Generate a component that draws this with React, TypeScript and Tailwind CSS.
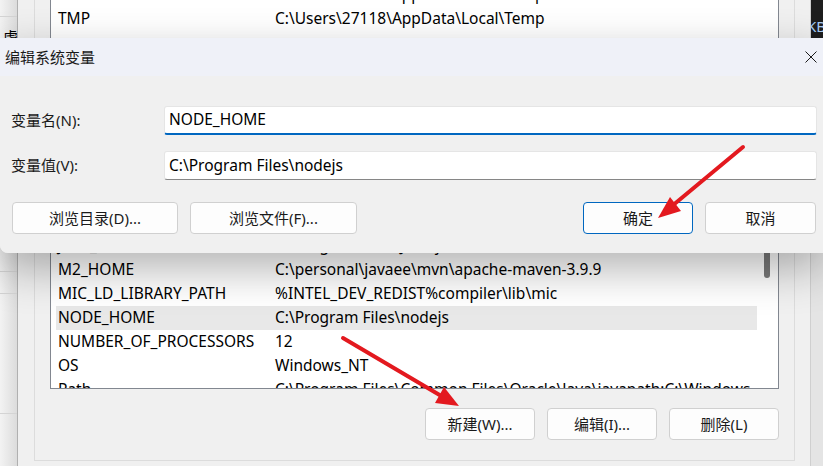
import React from "react";

type Row = { name: string; value: string; selected?: boolean };

const topRows: Row[] = [
  { name: "TEMP", value: "C:\\Users\\27118\\AppData\\Local\\Temp" },
  { name: "TMP", value: "C:\\Users\\27118\\AppData\\Local\\Temp" },
];

const bottomRows: Row[] = [
  { name: "JAVA_HOME", value: "C:\\Program Files\\Java\\jdk-17" },
  { name: "M2_HOME", value: "C:\\personal\\javaee\\mvn\\apache-maven-3.9.9" },
  { name: "MIC_LD_LIBRARY_PATH", value: "%INTEL_DEV_REDIST%compiler\\lib\\mic" },
  { name: "NODE_HOME", value: "C:\\Program Files\\nodejs", selected: true },
  { name: "NUMBER_OF_PROCESSORS", value: "12" },
  { name: "OS", value: "Windows_NT" },
  { name: "Path", value: "C:\\Program Files\\Common Files\\Oracle\\Java\\javapath;C:\\Windows" },
];

const VarRow = ({ row }: { row: Row }) => (
  <div className={`flex h-[24px] items-center pl-[2px] whitespace-nowrap ${row.selected ? "bg-[#e8e8e8]" : ""}`}>
    <div className="w-[217px] shrink-0">{row.name}</div>
    <div>{row.value}</div>
  </div>
);

const WinButton = ({ label, className = "" }: { label: string; className?: string }) => (
  <button
    className={`flex h-[32px] items-center justify-center rounded-[4px] border bg-[#fdfdfd] text-[15px] text-[#1a1a1a] ${className}`}
  >
    {label}
  </button>
);

const LeftStrip = () => (
  <div className="flex w-[17px] shrink-0 flex-col overflow-hidden bg-linear-to-r from-[#f3f3f3] to-[#dcdcdc]">
    <div className="h-[17px] shrink-0 border-b border-[#d4d4d4]" />
    <div className="h-[255px] shrink-0 border-b border-[#d4d4d4] pl-[3px] pt-[10px] text-[15px] leading-[20px] whitespace-nowrap">
      虚
    </div>
    <div className="h-[22px] shrink-0 border-b border-[#d4d4d4]" />
    <div className="h-[120px] shrink-0 border-b border-[#d4d4d4]" />
  </div>
);

const RightStrip = () => (
  <div className="flex w-[12px] shrink-0 flex-col overflow-hidden">
    <div className="flex h-[38px] shrink-0 items-center bg-[#1e1e1e] pt-[14px] text-[15px] whitespace-nowrap text-[#a9cdf5]">
      <span className="-ml-[4px]">KB</span>
    </div>
    <div className="flex-1 bg-[#e4e4e4]" />
  </div>
);

const MainWindow = () => (
  <div className="flex flex-1 flex-col overflow-hidden border-x border-l-[#b0b0b0] border-r-[#cfcfcf] bg-[#f0f0f0]">
    <div className="ml-[16px] mr-[15px] border-x border-b border-[#dcdcdc] px-[15px] pb-[20px]">
      <div className="-mt-[18px] flex h-[407px] overflow-hidden border border-[#828790] bg-white text-[15.5px] text-black">
        <div className="flex-1 pl-[5px]">
          {topRows.map((r) => (
            <VarRow key={r.name} row={r} />
          ))}
          <div className="h-[203px]" />
          {bottomRows.map((r) => (
            <VarRow key={r.name} row={r} />
          ))}
        </div>
        <div className="w-[21px] shrink-0">
          <div className="ml-[7px] mt-[197px] h-[98px] w-[6px] rounded-full bg-[#7a7a7a]" />
        </div>
      </div>
      <div className="mt-[19px] flex justify-end gap-[12px]">
        <WinButton label="新建(W)..." className="w-[110px] border-[#d0d0d0]" />
        <WinButton label="编辑(I)..." className="w-[110px] border-[#d0d0d0]" />
        <WinButton label="删除(L)" className="w-[110px] border-[#d0d0d0]" />
      </div>
    </div>
  </div>
);

const Field = ({ label, value, active }: { label: string; value: string; active?: boolean }) => (
  <div className="flex items-center pl-[11px]">
    <div className="w-[153px] shrink-0 text-[15px] text-[#1a1a1a]">{label}</div>
    <div
      className={`flex h-[29px] w-[653px] items-center rounded-[3px] border border-[#e5e5e5] bg-white pl-[4px] text-[15.5px] text-black ${
        active ? "border-b-2 border-b-[#0067c0]" : "border-b-[#868686]"
      }`}
    >
      {value}
    </div>
  </div>
);

const EditDialog = () => (
  <div className="absolute left-0 top-[38px] w-[823px] rounded-bl-[8px] shadow-[0_16px_44px_rgba(0,0,0,0.3)]">
    <div className="flex h-[38px] items-center justify-between bg-[#eff1f8] pl-[5px] pr-[6px]">
      <span className="text-[15px] text-[#1a1a1a]">编辑系统变量</span>
      <svg width="12" height="12" viewBox="0 0 12 12" fill="none" stroke="#1a1a1a" strokeWidth="1">
        <path d="M0.5 0.5L11.5 11.5M11.5 0.5L0.5 11.5" />
      </svg>
    </div>
    <div className="rounded-bl-[8px] bg-[#f0f0f0] pb-[19px] pt-[30px]">
      <Field label="变量名(N):" value="NODE_HOME" active />
      <div className="mt-[16px]">
        <Field label="变量值(V):" value={"C:\\Program Files\\nodejs"} />
      </div>
      <div className="mt-[22px] flex pl-[12px] pr-[7px]">
        <WinButton label="浏览目录(D)..." className="w-[166px] border-[#d0d0d0]" />
        <WinButton label="浏览文件(F)..." className="ml-[12px] w-[167px] border-[#d0d0d0]" />
        <WinButton label="确定" className="ml-auto w-[110px] border-[#0067c0]" />
        <WinButton label="取消" className="ml-[12px] w-[111px] border-[#d0d0d0]" />
      </div>
    </div>
  </div>
);

const Arrows = () => (
  <svg className="pointer-events-none absolute left-0 top-0" width="823" height="466" viewBox="0 0 823 466">
    <g stroke="#e3191f" strokeWidth="4" strokeLinecap="round" fill="#e3191f">
      <line x1="743" y1="147" x2="672" y2="206" />
      <line x1="343" y1="338" x2="443" y2="397" />
    </g>
    <g fill="#e3191f">
      <polygon points="658,218 681,211 670,197" />
      <polygon points="459,406 435,403 444,387" />
    </g>
  </svg>
);

export default function App() {
  return (
    <div className="relative h-[466px] w-[823px] overflow-hidden bg-[#f0f0f0] font-['Noto_Sans','Noto_Sans_CJK_SC',sans-serif]">
      <div className="flex h-full">
        <LeftStrip />
        <MainWindow />
        <RightStrip />
      </div>
      <EditDialog />
      <Arrows />
    </div>
  );
}
